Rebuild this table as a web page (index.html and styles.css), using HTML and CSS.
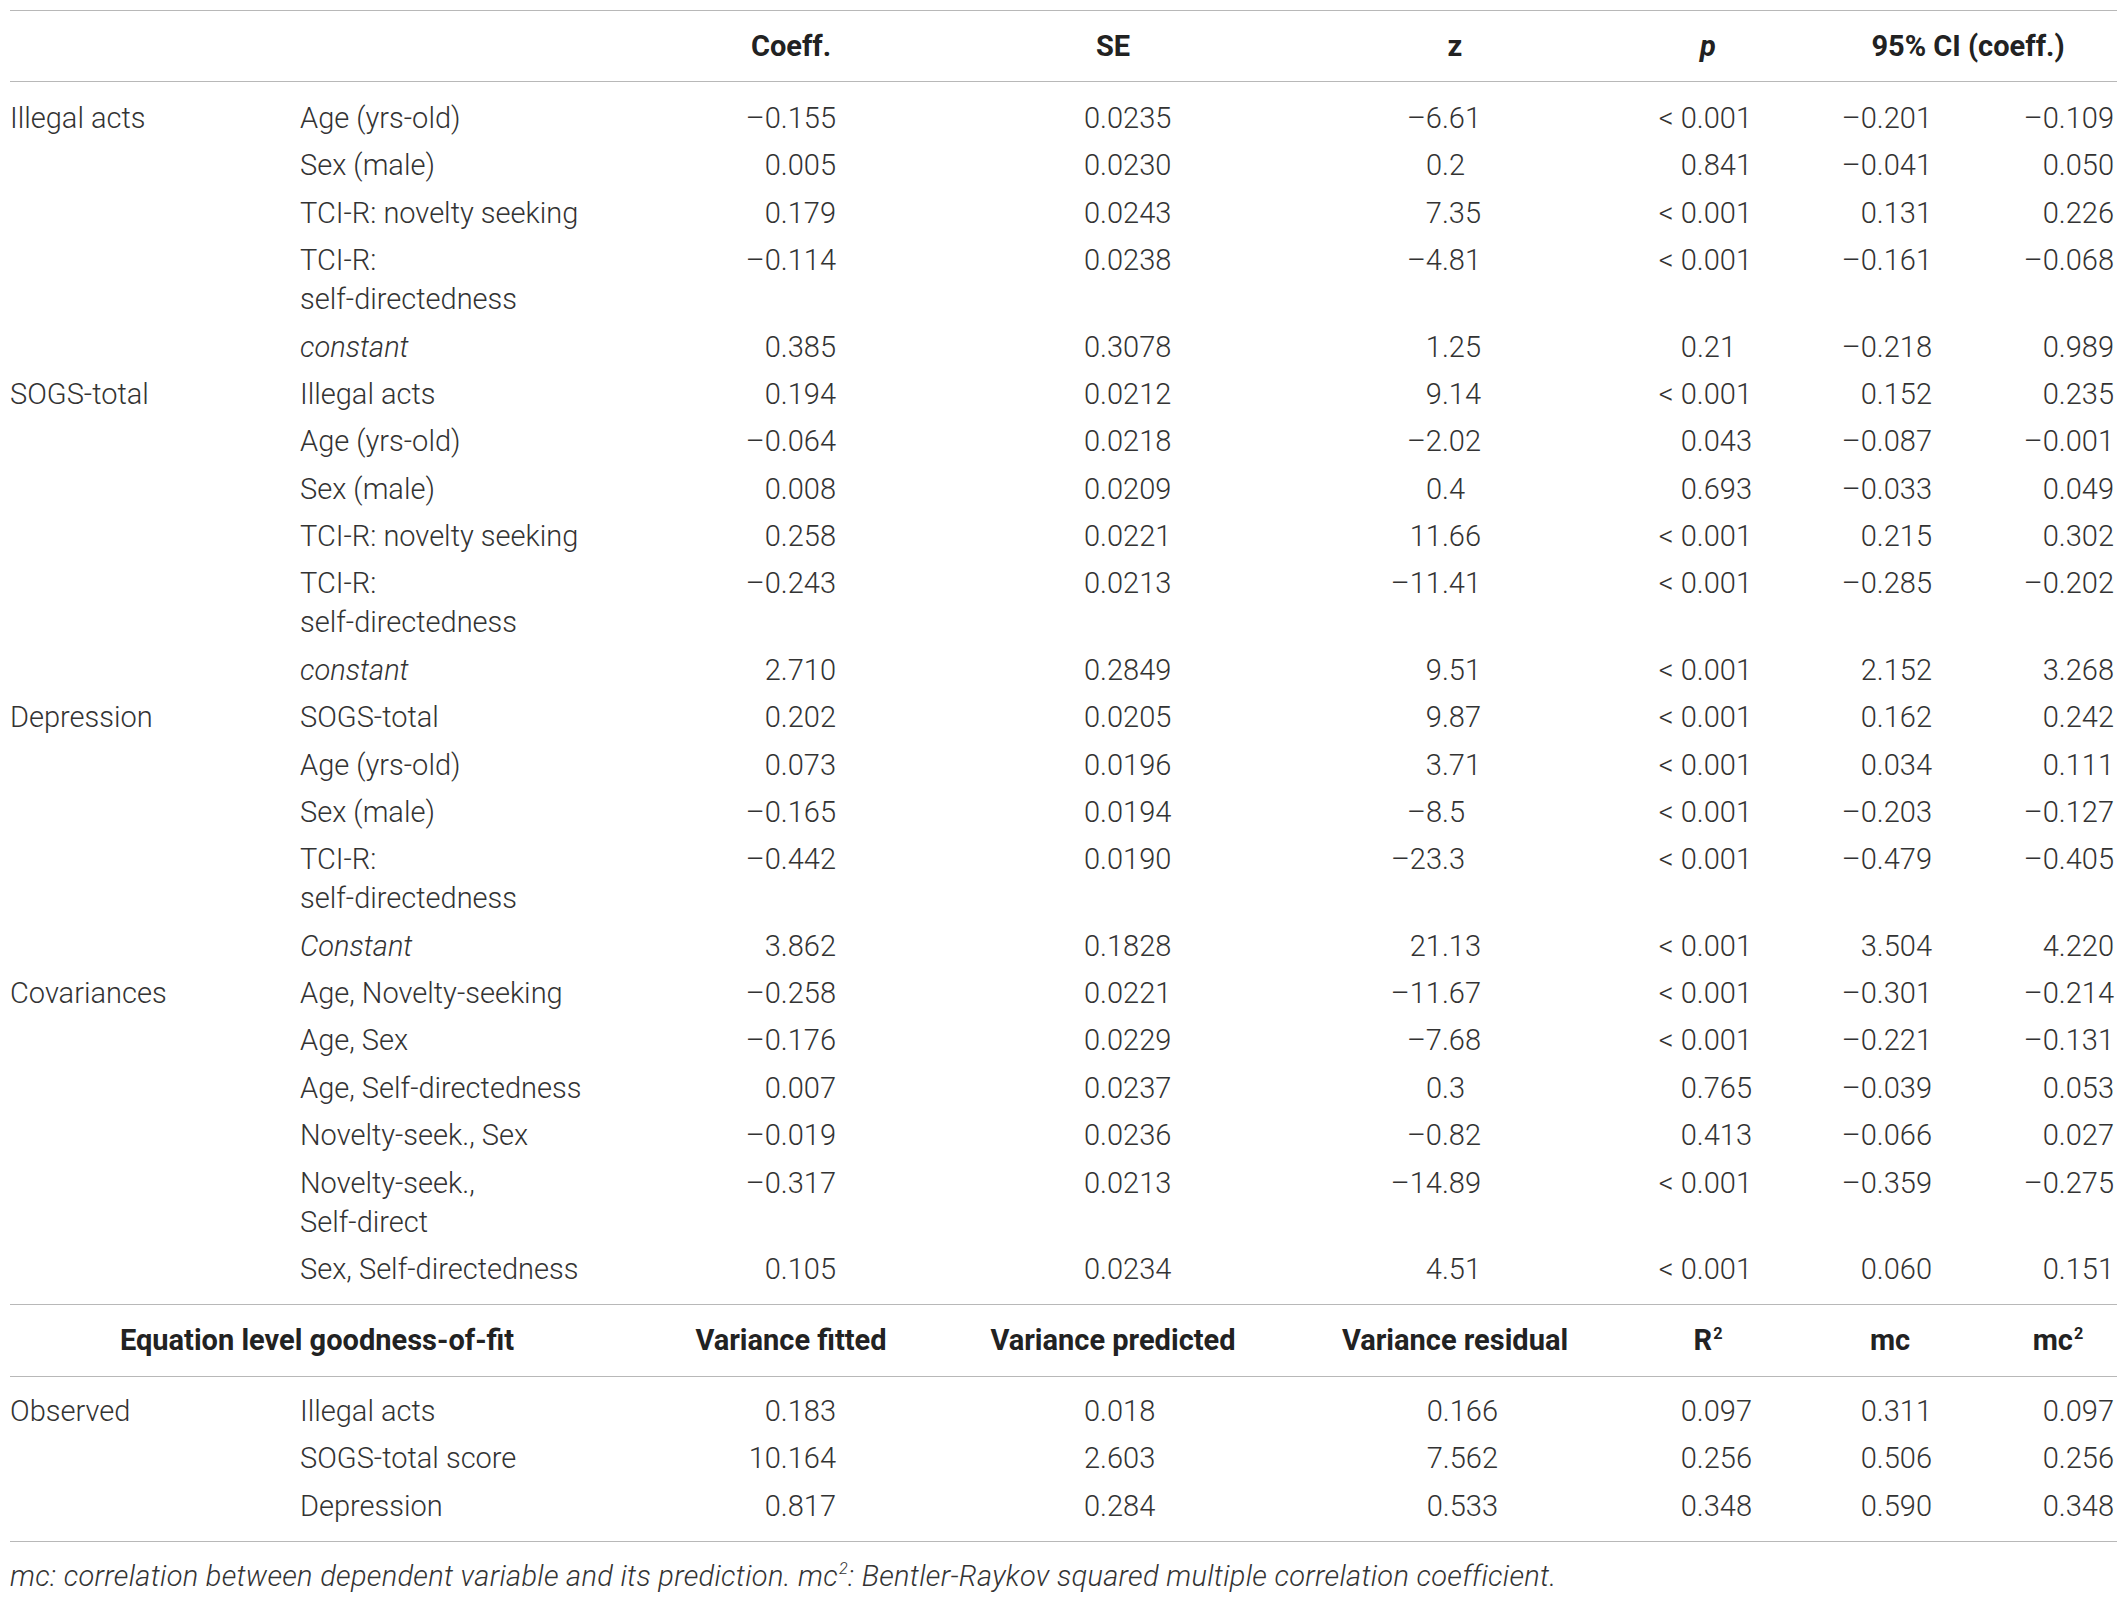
FILE: index.html
```html
<!DOCTYPE html>
<html lang="en">
<head>
<meta charset="utf-8">
<title>Table</title>
<link rel="stylesheet" href="styles.css">
</head>
<body>
<table class="tbl">
  <colgroup>
    <col class="w1"><col class="w2"><col class="w3"><col class="w4"><col class="w5"><col class="w6"><col class="w7"><col class="w8">
  </colgroup>
  <thead class="head">
    <tr>
      <th></th><th></th>
      <th>Coeff.</th>
      <th>SE</th>
      <th>z</th>
      <th><i>p</i></th>
      <th colspan="2" class="ci">95% CI (coeff.)</th>
    </tr>
  </thead>
  <tbody class="body">
    <tr class="first"><td class="lab">Illegal acts</td><td class="lab">Age (yrs-old)</td><td class="n3">–0.155</td><td class="n4">0.0235</td><td class="n5">–6.61</td><td class="n6">&lt; 0.001</td><td class="n7">–0.201</td><td class="n8">–0.109</td></tr>
    <tr><td></td><td class="lab">Sex (male)</td><td class="n3">0.005</td><td class="n4">0.0230</td><td class="n5 d1">0.2</td><td class="n6">0.841</td><td class="n7">–0.041</td><td class="n8">0.050</td></tr>
    <tr><td></td><td class="lab">TCI-R: novelty seeking</td><td class="n3">0.179</td><td class="n4">0.0243</td><td class="n5">7.35</td><td class="n6">&lt; 0.001</td><td class="n7">0.131</td><td class="n8">0.226</td></tr>
    <tr><td></td><td class="lab">TCI-R:<br>self-directedness</td><td class="n3">–0.114</td><td class="n4">0.0238</td><td class="n5">–4.81</td><td class="n6">&lt; 0.001</td><td class="n7">–0.161</td><td class="n8">–0.068</td></tr>
    <tr><td></td><td class="lab"><i>constant</i></td><td class="n3">0.385</td><td class="n4">0.3078</td><td class="n5">1.25</td><td class="n6 d2">0.21</td><td class="n7">–0.218</td><td class="n8">0.989</td></tr>
    <tr><td class="lab">SOGS-total</td><td class="lab">Illegal acts</td><td class="n3">0.194</td><td class="n4">0.0212</td><td class="n5">9.14</td><td class="n6">&lt; 0.001</td><td class="n7">0.152</td><td class="n8">0.235</td></tr>
    <tr><td></td><td class="lab">Age (yrs-old)</td><td class="n3">–0.064</td><td class="n4">0.0218</td><td class="n5">–2.02</td><td class="n6">0.043</td><td class="n7">–0.087</td><td class="n8">–0.001</td></tr>
    <tr><td></td><td class="lab">Sex (male)</td><td class="n3">0.008</td><td class="n4">0.0209</td><td class="n5 d1">0.4</td><td class="n6">0.693</td><td class="n7">–0.033</td><td class="n8">0.049</td></tr>
    <tr><td></td><td class="lab">TCI-R: novelty seeking</td><td class="n3">0.258</td><td class="n4">0.0221</td><td class="n5">11.66</td><td class="n6">&lt; 0.001</td><td class="n7">0.215</td><td class="n8">0.302</td></tr>
    <tr><td></td><td class="lab">TCI-R:<br>self-directedness</td><td class="n3">–0.243</td><td class="n4">0.0213</td><td class="n5">–11.41</td><td class="n6">&lt; 0.001</td><td class="n7">–0.285</td><td class="n8">–0.202</td></tr>
    <tr><td></td><td class="lab"><i>constant</i></td><td class="n3">2.710</td><td class="n4">0.2849</td><td class="n5">9.51</td><td class="n6">&lt; 0.001</td><td class="n7">2.152</td><td class="n8">3.268</td></tr>
    <tr><td class="lab">Depression</td><td class="lab">SOGS-total</td><td class="n3">0.202</td><td class="n4">0.0205</td><td class="n5">9.87</td><td class="n6">&lt; 0.001</td><td class="n7">0.162</td><td class="n8">0.242</td></tr>
    <tr><td></td><td class="lab">Age (yrs-old)</td><td class="n3">0.073</td><td class="n4">0.0196</td><td class="n5">3.71</td><td class="n6">&lt; 0.001</td><td class="n7">0.034</td><td class="n8">0.111</td></tr>
    <tr><td></td><td class="lab">Sex (male)</td><td class="n3">–0.165</td><td class="n4">0.0194</td><td class="n5 d1">–8.5</td><td class="n6">&lt; 0.001</td><td class="n7">–0.203</td><td class="n8">–0.127</td></tr>
    <tr><td></td><td class="lab">TCI-R:<br>self-directedness</td><td class="n3">–0.442</td><td class="n4">0.0190</td><td class="n5 d1">–23.3</td><td class="n6">&lt; 0.001</td><td class="n7">–0.479</td><td class="n8">–0.405</td></tr>
    <tr><td></td><td class="lab"><i>Constant</i></td><td class="n3">3.862</td><td class="n4">0.1828</td><td class="n5">21.13</td><td class="n6">&lt; 0.001</td><td class="n7">3.504</td><td class="n8">4.220</td></tr>
    <tr><td class="lab">Covariances</td><td class="lab">Age, Novelty-seeking</td><td class="n3">–0.258</td><td class="n4">0.0221</td><td class="n5">–11.67</td><td class="n6">&lt; 0.001</td><td class="n7">–0.301</td><td class="n8">–0.214</td></tr>
    <tr><td></td><td class="lab">Age, Sex</td><td class="n3">–0.176</td><td class="n4">0.0229</td><td class="n5">–7.68</td><td class="n6">&lt; 0.001</td><td class="n7">–0.221</td><td class="n8">–0.131</td></tr>
    <tr><td></td><td class="lab">Age, Self-directedness</td><td class="n3">0.007</td><td class="n4">0.0237</td><td class="n5 d1">0.3</td><td class="n6">0.765</td><td class="n7">–0.039</td><td class="n8">0.053</td></tr>
    <tr><td></td><td class="lab">Novelty-seek., Sex</td><td class="n3">–0.019</td><td class="n4">0.0236</td><td class="n5">–0.82</td><td class="n6">0.413</td><td class="n7">–0.066</td><td class="n8">0.027</td></tr>
    <tr><td></td><td class="lab">Novelty-seek.,<br>Self-direct</td><td class="n3">–0.317</td><td class="n4">0.0213</td><td class="n5">–14.89</td><td class="n6">&lt; 0.001</td><td class="n7">–0.359</td><td class="n8">–0.275</td></tr>
    <tr class="last"><td></td><td class="lab">Sex, Self-directedness</td><td class="n3">0.105</td><td class="n4">0.0234</td><td class="n5">4.51</td><td class="n6">&lt; 0.001</td><td class="n7">0.060</td><td class="n8">0.151</td></tr>
  </tbody>
  <tbody class="subhead">
    <tr>
      <th colspan="2" class="eq">Equation level goodness-of-fit</th>
      <th>Variance fitted</th>
      <th>Variance predicted</th>
      <th>Variance residual</th>
      <th>R<sup>2</sup></th>
      <th>mc</th>
      <th class="mc2">mc<sup>2</sup></th>
    </tr>
  </tbody>
  <tbody class="body fit">
    <tr class="first"><td class="lab">Observed</td><td class="lab">Illegal acts</td><td class="n3">0.183</td><td class="n4">0.018</td><td class="n5 d3">0.166</td><td class="n6">0.097</td><td class="n7">0.311</td><td class="n8">0.097</td></tr>
    <tr><td></td><td class="lab">SOGS-total score</td><td class="n3">10.164</td><td class="n4">2.603</td><td class="n5 d3">7.562</td><td class="n6">0.256</td><td class="n7">0.506</td><td class="n8">0.256</td></tr>
    <tr class="last"><td></td><td class="lab">Depression</td><td class="n3">0.817</td><td class="n4">0.284</td><td class="n5 d3">0.533</td><td class="n6">0.348</td><td class="n7">0.590</td><td class="n8">0.348</td></tr>
  </tbody>
</table>
<p class="note">mc: correlation between dependent variable and its prediction. mc<sup>2</sup>: Bentler-Raykov squared multiple correlation coefficient.</p>
</body>
</html>
```
FILE: styles.css
```css
html, body {
  margin: 0;
  padding: 0;
  background: #ffffff;
}

body {
  font-family: Roboto, "Liberation Sans", Arial, sans-serif;
  font-weight: 300;
  font-size: 29px;
  color: #333333;
}

.tbl {
  border-collapse: collapse;
  table-layout: fixed;
  width: 2107px;
  margin: 10px 0 0 10px;
  border-top: 1px solid #b8b8b8;
}

.w1 { width: 290px; }
.w2 { width: 350px; }
.w3 { width: 282px; }
.w4 { width: 362px; }
.w5 { width: 322px; }
.w6 { width: 184px; }
.w7 { width: 180px; }
.w8 { width: 137px; }

.tbl th {
  font-weight: 700;
  color: #222222;
  text-align: center;
  padding: 0;
  white-space: nowrap;
}

.head th {
  height: 70px;
}

.head {
  border-bottom: 1px solid #b8b8b8;
}

.ci {
  padding-left: 19px !important;
}

.subhead {
  border-top: 1px solid #b8b8b8;
  border-bottom: 1px solid #b8b8b8;
}

.subhead th {
  height: 71px;
}

.eq {
  padding-right: 26px !important;
}

.mc2 {
  padding-left: 19px !important;
}

.tbl sup {
  font-size: 0.56em;
  line-height: 0;
  vertical-align: 0.72em;
  margin-left: 1px;
}

.tbl td {
  padding: 4.2px 0;
  line-height: 39px;
  vertical-align: top;
  white-space: nowrap;
}

.body .first td {
  padding-top: 17px;
}

.body .last td {
  padding-bottom: 15px;
}

.fit .first td {
  padding-top: 15px;
}

.fit {
  border-bottom: 1px solid #b8b8b8;
}

.lab {
  text-align: left;
}

.n3 { text-align: right; padding-right: 96px !important; }
.n4 { text-align: left; padding-left: 152px !important; }
.n5 { text-align: right; padding-right: 135px !important; }
.n5.d1 { padding-right: 151px !important; }
.n5.d3 { padding-right: 118px !important; }
.n6 { text-align: right; padding-right: 48px !important; }
.n6.d2 { padding-right: 64px !important; }
.n7 { text-align: right; padding-right: 48px !important; }
.n8 { text-align: right; padding-right: 3px !important; }

.note {
  margin: 14px 0 0 10px;
  font-style: italic;
  line-height: 40px;
  letter-spacing: 0.3px;
}

.note sup {
  font-size: 0.56em;
  line-height: 0;
  vertical-align: 0.72em;
  margin-left: 1px;
}
```
